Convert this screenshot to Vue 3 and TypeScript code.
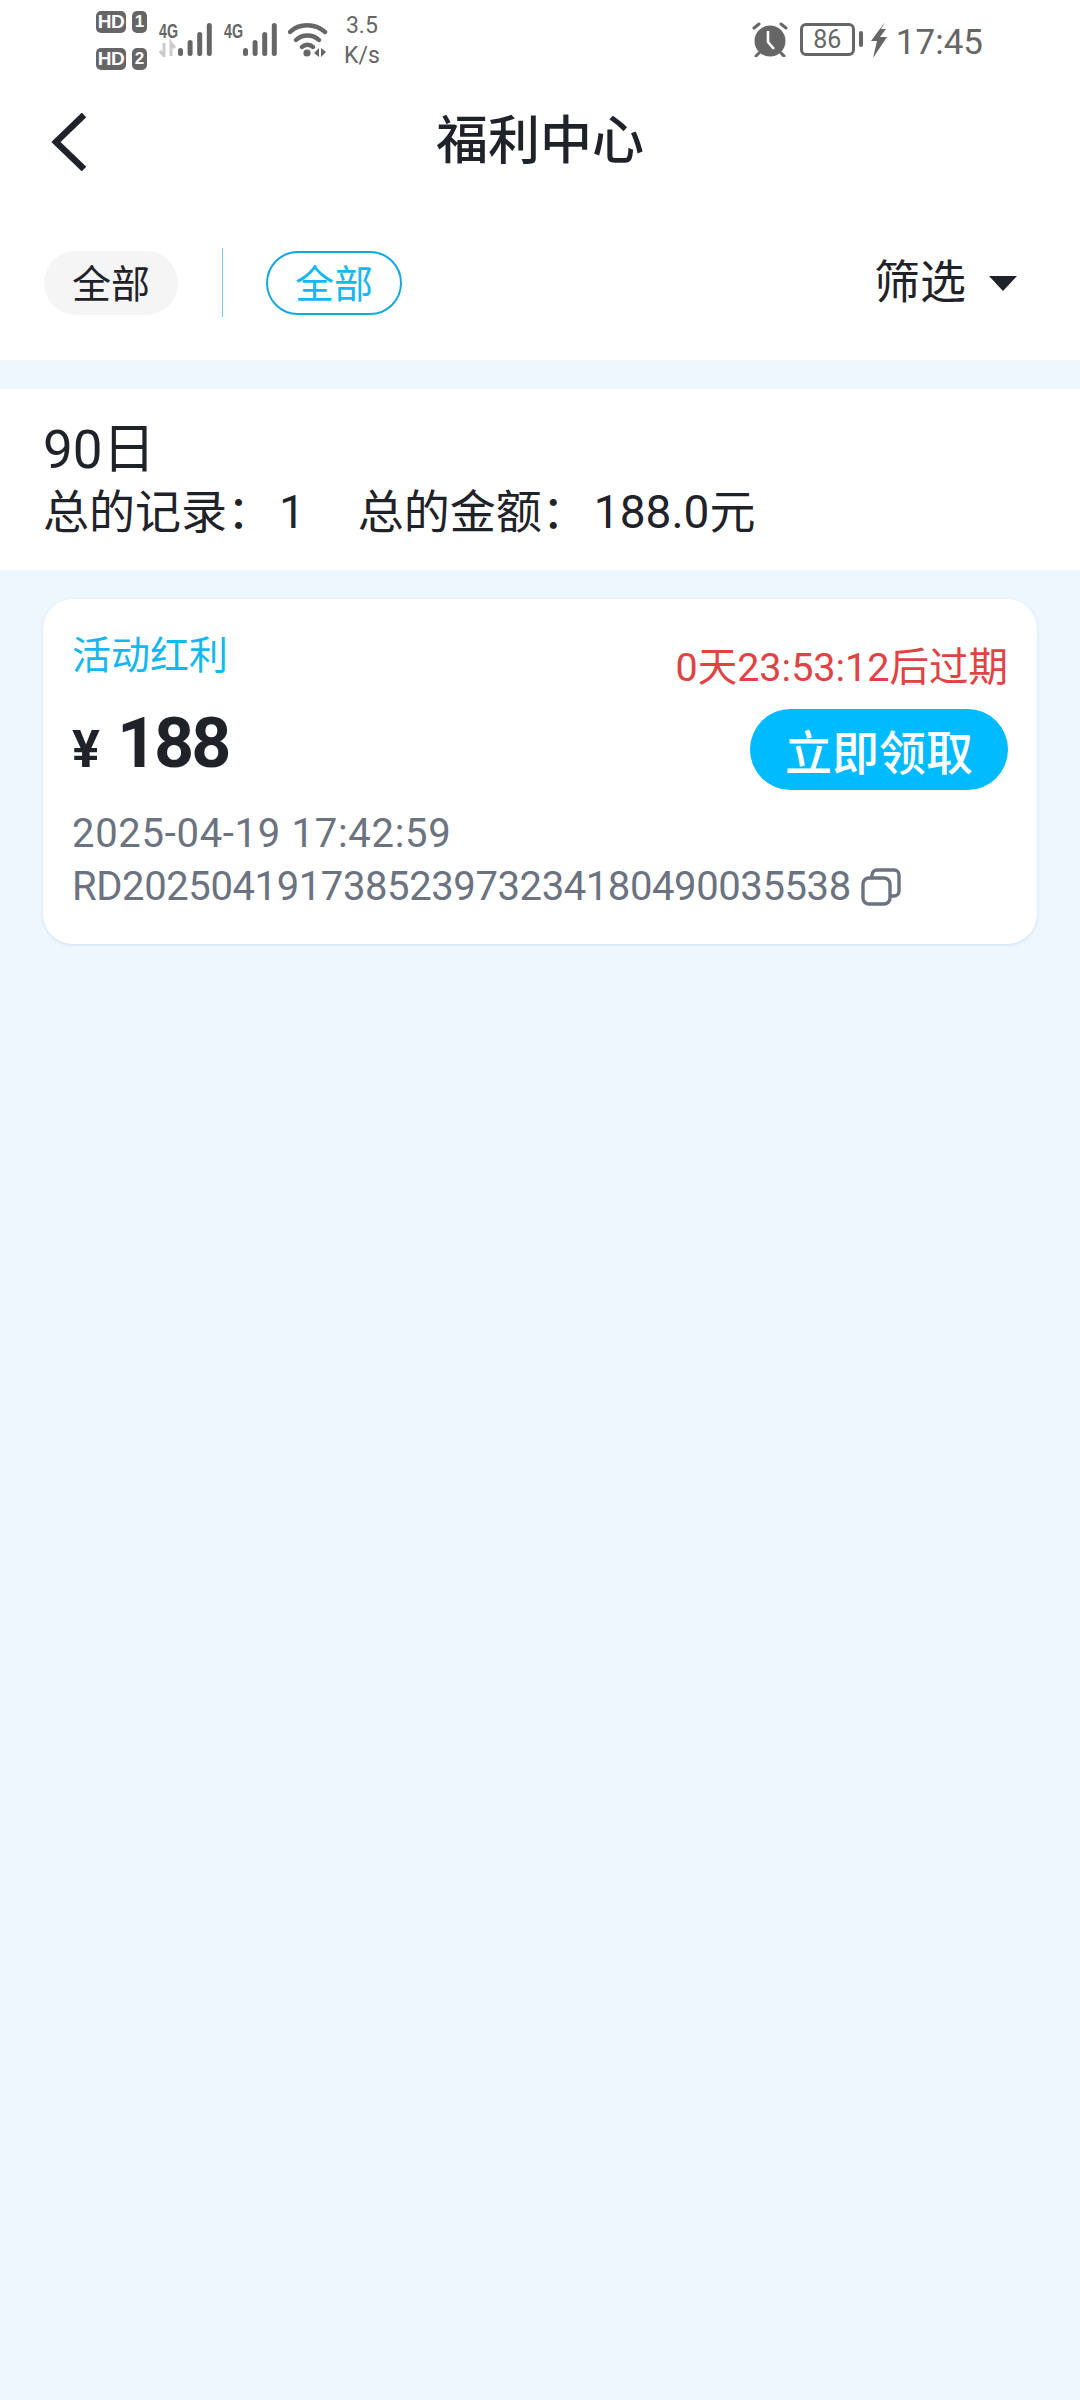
<script setup lang="ts">
interface Bonus {
  label: string
  expires: string
  amount: string
  time: string
  code: string
}

const bonus: Bonus = {
  label: '活动红利',
  expires: '0天23:53:12后过期',
  amount: '188',
  time: '2025-04-19 17:42:59',
  code: 'RD202504191738523973234180490035538',
}

const barHeights = [8, 16, 24, 33]
</script>

<template>
  <div class="page">
    <div class="status-bar">
      <div class="status-left">
        <div class="sims">
          <div v-for="n in 2" :key="n" class="sim">
            <span class="hd">HD</span>
            <span class="sim-no">{{ n }}</span>
          </div>
        </div>
        <svg v-for="n in 2" :key="n" class="signal" width="53" height="42" viewBox="0 -8 53 42">
          <text x="0" y="15" class="net-text" textLength="19" lengthAdjust="spacingAndGlyphs">4G</text>
          <path v-if="n === 1" d="M5 20v13L1 28M12 33V20l4 5" stroke="#ccc" stroke-width="3" fill="none" />
          <rect
            v-for="(h, i) in barHeights"
            :key="i"
            :x="19 + i * 9.6"
            :y="33 - h"
            width="5"
            :height="h"
            rx="2.5"
            fill="#666"
          />
        </svg>
        <svg class="wifi" width="40" height="34" viewBox="0 0 40 34">
          <path d="M2 9C11 0 27 0 37 9M8 17c6-6 17-6 23 0M14 24c3-3 8-3 11 0" fill="none" stroke="#666" stroke-width="4.4" stroke-linecap="round" />
          <circle cx="19" cy="30" r="3.6" fill="#666" />
          <path d="M31 25v9l-5-4zM33 25v9l5-5z" fill="#666" />
        </svg>
        <div class="speed">
          <span>3.5</span>
          <span>K/s</span>
        </div>
      </div>
      <div class="status-right">
        <svg width="36" height="35" viewBox="0 0 36 35">
          <circle cx="18" cy="19" r="15.5" fill="#666" />
          <path d="M16 9v11l6 7" stroke="#fff" stroke-width="2.6" fill="none" />
          <path d="M2 6l5-4M34 6l-5-4M7 31l-3 3M29 31l3 3" stroke="#666" stroke-width="3" stroke-linecap="round" />
        </svg>
        <div class="battery">86</div>
        <span class="battery-nub"></span>
        <svg class="bolt" width="16" height="36" viewBox="0 0 16 36">
          <path d="M14 0L0 19h6L2 36 16 15H9l6-8H10z" fill="#666" />
        </svg>
        <span class="clock">17:45</span>
      </div>
    </div>

    <header class="nav">
      <svg class="back" width="36" height="58" viewBox="0 0 36 58">
        <path d="M33 2L5 29l28 27" fill="none" stroke="#1f2329" stroke-width="6.5" />
      </svg>
      <h1 class="title">福利中心</h1>
    </header>

    <div class="filters">
      <span class="pill">全部</span>
      <span class="divider"></span>
      <span class="pill active">全部</span>
      <div class="filter-btn">
        <span>筛选</span>
        <i class="caret"></i>
      </div>
    </div>

    <section class="summary">
      <div class="period">90日</div>
      <div class="totals">
        <span>总的记录：<b class="value">1</b></span>
        <span>总的金额：<b class="value">188.0元</b></span>
      </div>
    </section>

    <main class="list">
      <article class="card">
        <div class="card-top">
          <div>
            <div class="label">{{ bonus.label }}</div>
            <div class="amount"><span class="yen">¥</span>{{ bonus.amount }}</div>
          </div>
          <div class="card-side">
            <div class="expires">{{ bonus.expires }}</div>
            <button class="claim">立即领取</button>
          </div>
        </div>
        <div class="time">{{ bonus.time }}</div>
        <div class="code">
          <span class="code-text">{{ bonus.code }}</span>
          <svg width="40" height="38" viewBox="0 0 40 38" fill="none" stroke="#6b7280" stroke-width="3.4">
            <rect x="2" y="10" width="27" height="26" rx="6" />
            <path d="M11 9V7a5 5 0 0 1 5-5h17a5 5 0 0 1 5 5v16a5 5 0 0 1-5 5h-3" />
          </svg>
        </div>
      </article>
    </main>
  </div>
</template>

<style>
html,
body {
  margin: 0;
  background: #eef6fe;
}
</style>

<style scoped>
.page {
  width: 1080px;
  min-height: 2400px;
  background: #eef6fe;
  color: #1f2329;
  font-family: Roboto, "Noto Sans CJK SC", sans-serif;
}

.status-bar {
  height: 76px;
  background: #fff;
  display: flex;
  justify-content: space-between;
  padding: 0 97px 0 96px;
  color: #666;
}

.status-left,
.status-right {
  display: flex;
  align-items: flex-start;
}

.sims {
  padding-top: 11px;
  display: flex;
  flex-direction: column;
  gap: 15px;
}

.sim {
  display: flex;
  gap: 6px;
  height: 22px;
}

.hd,
.sim-no {
  background: #666;
  color: #fff;
  border-radius: 5px;
  font-size: 19px;
  font-weight: 700;
  line-height: 22px;
  text-align: center;
  font-family: "Liberation Sans", sans-serif;
}

.hd {
  width: 30px;
  letter-spacing: -0.5px;
}

.sim-no {
  width: 15px;
  font-size: 17px;
}

.signal {
  margin: 15px 0 0 12px;
}

.net-text {
  font-size: 20px;
  font-weight: 700;
  fill: #666;
  font-family: "Liberation Sans", sans-serif;
}

.wifi {
  margin: 23px 0 0 11px;
}

.speed {
  display: flex;
  flex-direction: column;
  align-items: center;
  margin: 11px 0 0 16px;
  font-size: 23px;
  line-height: 30px;
}

.status-right {
  padding-top: 22px;
}

.battery {
  width: 55px;
  height: 33px;
  box-sizing: border-box;
  margin: 1px 0 0 12px;
  border: 3px solid #666;
  border-radius: 6px;
  font-size: 25px;
  line-height: 27px;
  text-align: center;
}

.battery-nub {
  width: 4px;
  height: 16px;
  margin: 9px 0 0 4px;
  background: #666;
  border-radius: 2px;
}

.bolt {
  margin-left: 8px;
}

.clock {
  margin: 3px 0 0 9px;
  font-size: 35px;
  line-height: 36px;
}

.nav {
  height: 132px;
  background: #fff;
  display: flex;
  align-items: center;
  justify-content: center;
  position: relative;
}

.back {
  position: absolute;
  left: 51px;
  top: 37px;
}

.title {
  margin: 0;
  font-size: 52px;
  font-weight: 500;
  line-height: 70px;
}

.filters {
  height: 152px;
  box-sizing: border-box;
  padding: 43px 44px 0;
  background: #fff;
  display: flex;
  align-items: flex-start;
}

.pill {
  width: 134px;
  height: 64px;
  box-sizing: border-box;
  border-radius: 32px;
  background: #f5f5f5;
  font-size: 39px;
  line-height: 68px;
  text-align: center;
}

.pill.active {
  width: 136px;
  background: #fff;
  color: #14b8f0;
  border: 2px solid #14a9dc;
  line-height: 64px;
}

.divider {
  width: 1px;
  height: 69px;
  margin: -3px 43px 0 44px;
  background: #7cc9e4;
}

.filter-btn {
  margin-left: auto;
  padding-right: 19px;
  display: flex;
  align-items: center;
  gap: 23px;
  height: 64px;
  font-size: 46px;
}

.filter-btn span {
  line-height: 60px;
  margin-top: -2px;
}

.caret {
  width: 0;
  height: 0;
  border-left: 14px solid transparent;
  border-right: 14px solid transparent;
  border-top: 15px solid #1f2329;
}

.summary {
  margin-top: 29px;
  height: 181px;
  box-sizing: border-box;
  padding: 24px 43px 0;
  background: #fff;
}

.period {
  font-size: 53px;
  line-height: 74px;
}

.totals {
  display: flex;
  gap: 53px;
  margin-top: -4px;
  font-size: 46px;
  line-height: 58px;
}

.value {
  margin-left: 6px;
  font-weight: 400;
}

.list {
  padding: 29px 43px;
}

.card {
  height: 345px;
  box-sizing: border-box;
  padding: 30px 29px 0 29px;
  background: #fff;
  border-radius: 30px;
  box-shadow: 0 1px 3px rgba(120, 160, 200, 0.25);
}

.card-top {
  display: flex;
  justify-content: space-between;
}

.card-side {
  display: flex;
  flex-direction: column;
  align-items: flex-end;
}

.label {
  margin-top: 1px;
  color: #14b8f0;
  font-size: 39px;
  line-height: 52px;
}

.amount {
  margin-top: 16px;
  font-size: 70px;
  font-weight: 700;
  line-height: 90px;
  letter-spacing: -3px;
}

.yen {
  margin-right: 17px;
  font-size: 52px;
  letter-spacing: 0;
}

.expires {
  margin-top: 13px;
  color: #e04343;
  font-size: 39.5px;
  line-height: 52px;
}

.claim {
  width: 258px;
  height: 81px;
  margin-top: 15px;
  border: 0;
  border-radius: 41px;
  background: #00bbff;
  color: #fff;
  font-family: inherit;
  font-size: 47px;
  font-weight: 500;
}

.time,
.code {
  color: #6b7280;
  font-size: 40px;
  line-height: 53px;
}

.time {
  margin-top: 12px;
  letter-spacing: 0.7px;
}

.code {
  display: flex;
  align-items: center;
  gap: 10px;
}

.code-text {
  letter-spacing: -0.4px;
}
</style>
